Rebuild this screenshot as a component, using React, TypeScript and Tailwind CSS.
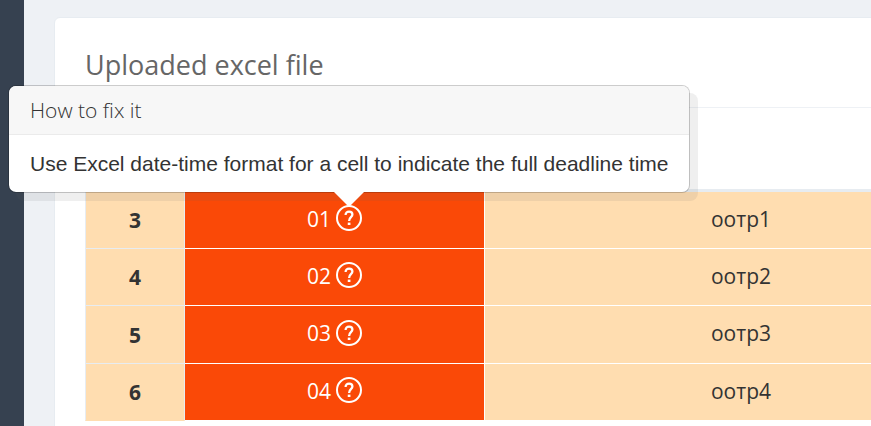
interface ExcelRow {
  id: number;
  code: string;
  name: string;
  height: string;
}

const rows: ExcelRow[] = [
  { id: 3, code: '01', name: 'оотр1', height: 'h-[57px]' },
  { id: 4, code: '02', name: 'оотр2', height: 'h-[57px]' },
  { id: 5, code: '03', name: 'оотр3', height: 'h-[58px]' },
  { id: 6, code: '04', name: 'оотр4', height: 'h-[57px]' },
];

function HelpIcon() {
  return (
    <svg className="-mt-[4px] size-[26px] shrink-0" viewBox="0 0 26 26" fill="none" stroke="currentColor">
      <circle cx="13" cy="13" r="12" strokeWidth="2" />
      <path
        d="M9.6 10C9.6 7.8 10.9 6.6 13.1 6.6C15.2 6.6 16.4 7.8 16.4 9.6C16.4 12.3 13.1 12.2 13.1 15.9"
        strokeWidth="2.3"
      />
      <path d="M13.1 17.6V20" strokeWidth="2.7" />
    </svg>
  );
}

function Popover() {
  return (
    <div
      className="absolute left-[8px] top-[85px] h-[108px] w-[682px] rounded-[8px] border border-black/20 bg-white bg-clip-padding shadow-[8px_8px_rgba(102,102,102,0.1)]"
      role="tooltip"
    >
      <h3 className="h-[49px] rounded-t-[7px] border-b border-[#ebebeb] bg-[#f7f7f7] pl-[21px] font-['Open_Sans',sans-serif] text-[21px] font-light leading-[48px] text-[#333]">
        How to fix it
      </h3>
      <p className="whitespace-nowrap pl-[21px] font-['Liberation_Sans',sans-serif] text-[21px] leading-[58px] text-[#333]">
        Use Excel date-time format for a cell to indicate the full deadline time
      </p>
      <svg className="absolute left-[325px] top-[106px] h-[16px] w-[30px]" viewBox="0 0 30 16">
        <path d="M0 0H30L15 15Z" fill="#fff" />
      </svg>
    </div>
  );
}

export default function App() {
  return (
    <div className="relative flex h-[426px] w-full overflow-hidden bg-[#eef1f5] font-['Open_Sans',sans-serif]">
      <aside className="w-[24px] shrink-0 bg-[#364150]" />
      <main className="min-w-0 flex-1 pl-[30px] pt-[17px]">
        <section className="h-[430px] w-[1000px] rounded-tl-[6px] border border-[#e7ecf1] bg-white pl-[30px]">
          <header className="h-[90px] border-b border-[#eef1f5] pt-[29px]">
            <h2 className="text-[27px] leading-[36px] text-[#666]">Uploaded excel file</h2>
          </header>
          <div className="mt-[81px] w-[912px] border-t-[3px] border-[#e7ecf1] text-[21px] text-[#333]">
            {rows.map((row) => (
              <div key={row.id} className={`group grid grid-cols-[100px_300px_512px] ${row.height}`}>
                <div className="flex items-center justify-center border-x border-b border-[#e7ecf1] bg-[#ffddb0] pt-[2px] font-bold group-last:border-b-[#ffddb0]">
                  {row.id}
                </div>
                <div className="flex items-center justify-center gap-[5px] border-b border-r border-white bg-[#fa4907] text-white">
                  <span className="self-start leading-[54px]">{row.code}</span>
                  <HelpIcon />
                </div>
                <div className="border-b border-white bg-[#ffddb0] text-center leading-[54px]">{row.name}</div>
              </div>
            ))}
          </div>
        </section>
      </main>
      <Popover />
    </div>
  );
}
